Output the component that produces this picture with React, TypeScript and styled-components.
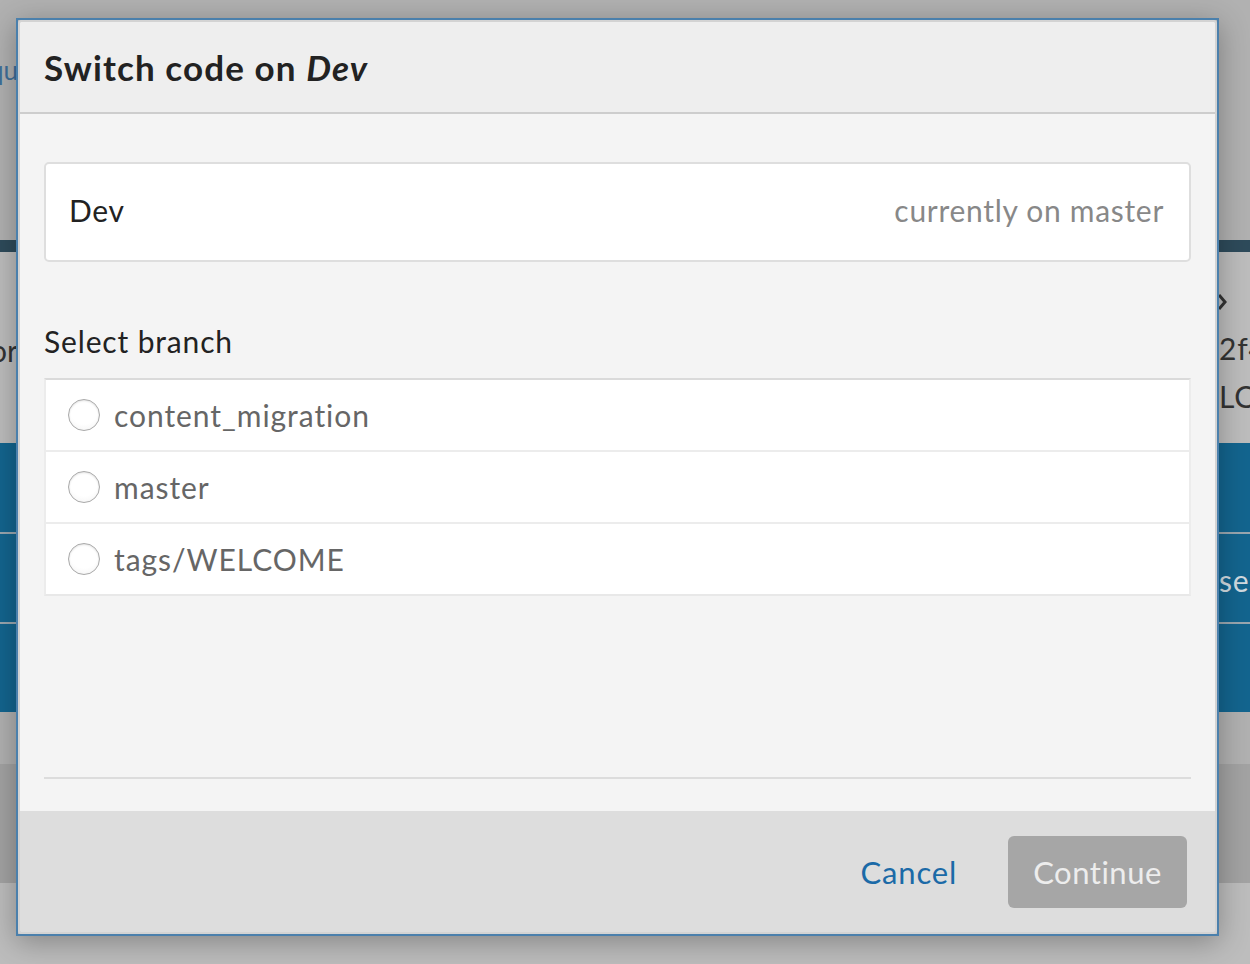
import React from "react";
import styled, { createGlobalStyle } from "styled-components";

const Global = createGlobalStyle`
  html, body { margin: 0; padding: 0; }
  body {
    width: 1250px;
    height: 964px;
    overflow: hidden;
    font-family: Lato, "Open Sans", Arial, sans-serif;
    background: #bdbdbd;
  }
`;

const Page = styled.div`
  width: 1250px;
  height: 964px;
  display: flex;
  flex-direction: column;
  overflow: hidden;
`;

const Band = styled.div<{ $bg: string; $h: number; $line?: string }>`
  flex: 0 0 ${(p) => p.$h}px;
  background: ${(p) => p.$bg};
  display: flex;
  box-sizing: border-box;
  border-top: ${(p) => (p.$line ? `2px solid ${p.$line}` : "none")};
`;

const LeftGutter = styled.div<{ $pt: number }>`
  width: 16px;
  overflow: hidden;
  display: flex;
  justify-content: flex-end;
  align-items: flex-start;
  padding-top: ${(p) => p.$pt}px;
  box-sizing: border-box;
`;

const Middle = styled.div`
  flex: 1;
`;

const RightGutter = styled.div<{ $pt: number }>`
  width: 31px;
  overflow: hidden;
  display: flex;
  flex-direction: column;
  padding-top: ${(p) => p.$pt}px;
  box-sizing: border-box;
`;

const EdgeText = styled.span<{ $color: string; $size?: number }>`
  font-size: ${(p) => p.$size ?? 30}px;
  line-height: 36px;
  color: ${(p) => p.$color};
  white-space: nowrap;
  flex-shrink: 0;
  margin-right: -2px;
`;

const EdgeLine = styled.div<{ $color: string }>`
  font-size: 30px;
  line-height: 48px;
  height: 48px;
  color: ${(p) => p.$color};
  white-space: nowrap;
  letter-spacing: 0.8px;
`;

const ChevronRow = styled.div`
  height: 44px;
  display: flex;
  align-items: center;
`;

/* ---------- Modal ---------- */

const Modal = styled.div`
  position: fixed;
  left: 16px;
  top: 18px;
  width: 1203px;
  height: 918px;
  box-sizing: border-box;
  border: 2px solid #4b80ac;
  box-shadow: 0 6px 28px rgba(0, 0, 0, 0.3);
  display: flex;
  flex-direction: column;
`;

const ModalInner = styled.div`
  flex: 1;
  border: 2px solid #d3d3d3;
  border-radius: 3px;
  display: flex;
  flex-direction: column;
  overflow: hidden;
`;

const Header = styled.div`
  flex: 0 0 90px;
  background: #eeeeee;
  border-bottom: 2px solid #cdcdcd;
  display: flex;
  align-items: center;
  padding: 0 24px;
`;

const Title = styled.h1`
  margin: 0;
  font-size: 35px;
  font-weight: 700;
  color: #222;
  letter-spacing: 1.1px;
  & em {
    font-style: italic;
  }
`;

const Body = styled.div`
  flex: 1;
  background: #f4f4f4;
  padding: 48px 24px 32px;
  display: flex;
  flex-direction: column;
`;

const CurrentBox = styled.div`
  height: 100px;
  box-sizing: border-box;
  background: #fff;
  border: 2px solid #dedede;
  border-radius: 5px;
  display: flex;
  align-items: center;
  justify-content: space-between;
  padding: 0 25px 4px 23px;
  font-size: 30px;
  letter-spacing: 0.7px;
`;

const EnvName = styled.span`
  color: #222;
`;

const CurrentNote = styled.span`
  color: #888;
`;

const Label = styled.div`
  margin: 61px 0 19px;
  font-size: 30px;
  line-height: 36px;
  color: #222;
  letter-spacing: 0.85px;
`;

const List = styled.div`
  display: flex;
  flex-direction: column;
  border-top: 2px solid #dadada;
  border-bottom: 2px solid #e8e8e8;
  border-left: 2px solid #ececec;
  border-right: 2px solid #ececec;
  background: #ececec;
  gap: 2px;
`;

const Row = styled.label`
  height: 70px;
  background: #fff;
  display: flex;
  align-items: center;
  padding-left: 22px;
  gap: 14px;
  font-size: 30px;
  color: #666;
  letter-spacing: 0.95px;
  cursor: pointer;
`;

const Radio = styled.span`
  width: 32px;
  height: 32px;
  box-sizing: border-box;
  border-radius: 50%;
  border: 1px solid #a9a9a9;
  background: radial-gradient(circle at 50% 35%, #ffffff 55%, #f1f1f1 100%);
  box-shadow: inset 0 1px 2px rgba(0, 0, 0, 0.12);
  flex-shrink: 0;
`;

const Spacer = styled.div`
  flex: 1;
`;

const Divider = styled.div`
  height: 2px;
  background: #dcdcdc;
`;

const Footer = styled.div`
  flex: 0 0 121px;
  background: #dddddd;
  display: flex;
  align-items: center;
  justify-content: flex-end;
  padding: 0 28px 0 0;
  box-sizing: border-box;
  gap: 51px;
`;

const LinkButton = styled.button`
  border: none;
  background: none;
  padding: 0;
  font-family: inherit;
  font-size: 31px;
  color: #1b6aa7;
  letter-spacing: 0.8px;
  cursor: pointer;
`;

const PrimaryButton = styled.button`
  width: 179px;
  height: 72px;
  border: none;
  border-radius: 6px;
  background: #a6a6a6;
  color: #ededed;
  font-family: inherit;
  font-size: 31px;
  letter-spacing: 0.5px;
`;

const branches = ["content_migration", "master", "tags/WELCOME"];

export default function App() {
  return (
    <>
      <Global />
      <Page>
        <Band $bg="#b1b1b1" $h={240}>
          <LeftGutter $pt={52}>
            <EdgeText $color="#3f6f99" $size={26}>Requ</EdgeText>
          </LeftGutter>
          <Middle />
          <RightGutter $pt={0} />
        </Band>
        <Band $bg="#2e4b5b" $h={12}>
          <LeftGutter $pt={0} />
          <Middle />
          <RightGutter $pt={0} />
        </Band>
        <Band $bg="#bdbdbd" $h={191}>
          <LeftGutter $pt={80}>
            <EdgeText $color="#333">Vendor</EdgeText>
          </LeftGutter>
          <Middle />
          <RightGutter $pt={28}>
            <ChevronRow>
              <svg width="10" height="16" viewBox="0 0 10 16">
                <path d="M0 1 L6 8 L0 15" fill="none" stroke="#333" strokeWidth="3" />
              </svg>
            </ChevronRow>
            <EdgeLine $color="#333">2f4a</EdgeLine>
            <EdgeLine $color="#333">LCO</EdgeLine>
          </RightGutter>
        </Band>
        <Band $bg="#13658f" $h={89}>
          <LeftGutter $pt={0} />
          <Middle />
          <RightGutter $pt={0} />
        </Band>
        <Band $bg="#13658f" $h={90} $line="#9aa7b0">
          <LeftGutter $pt={0} />
          <Middle />
          <RightGutter $pt={22}>
            <EdgeLine $color="#d2dbe1">ses</EdgeLine>
          </RightGutter>
        </Band>
        <Band $bg="#13658f" $h={90} $line="#9aa7b0">
          <LeftGutter $pt={0} />
          <Middle />
          <RightGutter $pt={0} />
        </Band>
        <Band $bg="#b1b1b1" $h={52}>
          <LeftGutter $pt={0} />
          <Middle />
          <RightGutter $pt={0} />
        </Band>
        <Band $bg="#a3a3a3" $h={119}>
          <LeftGutter $pt={0} />
          <Middle />
          <RightGutter $pt={0} />
        </Band>
        <Band $bg="#bdbdbd" $h={81}>
          <LeftGutter $pt={0} />
          <Middle />
          <RightGutter $pt={0} />
        </Band>
      </Page>

      <Modal role="dialog" aria-label="Switch code on Dev">
        <ModalInner>
          <Header>
            <Title>
              Switch code on <em>Dev</em>
            </Title>
          </Header>
          <Body>
            <CurrentBox>
              <EnvName>Dev</EnvName>
              <CurrentNote>currently on master</CurrentNote>
            </CurrentBox>
            <Label>Select branch</Label>
            <List>
              {branches.map((b) => (
                <Row key={b}>
                  <Radio />
                  {b}
                </Row>
              ))}
            </List>
            <Spacer />
            <Divider />
          </Body>
          <Footer>
            <LinkButton>Cancel</LinkButton>
            <PrimaryButton disabled>Continue</PrimaryButton>
          </Footer>
        </ModalInner>
      </Modal>
    </>
  );
}
